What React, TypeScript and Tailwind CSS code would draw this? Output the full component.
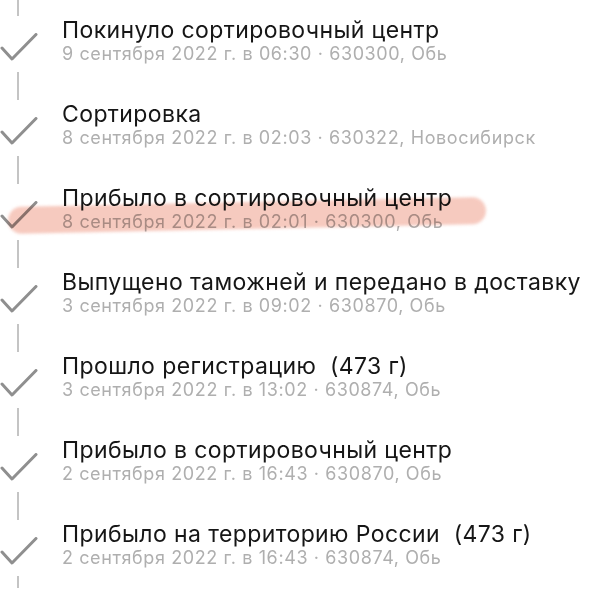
const events = [
  { title: 'Покинуло сортировочный центр', sub: '9 сентября 2022 г. в 06:30 · 630300, Обь' },
  { title: 'Сортировка', sub: '8 сентября 2022 г. в 02:03 · 630322, Новосибирск' },
  { title: 'Прибыло в сортировочный центр', sub: '8 сентября 2022 г. в 02:01 · 630300, Обь', marked: true },
  { title: 'Выпущено таможней и передано в доставку', sub: '3 сентября 2022 г. в 09:02 · 630870, Обь' },
  { title: 'Прошло регистрацию  (473 г)', sub: '3 сентября 2022 г. в 13:02 · 630874, Обь' },
  { title: 'Прибыло в сортировочный центр', sub: '2 сентября 2022 г. в 16:43 · 630870, Обь' },
  { title: 'Прибыло на территорию России  (473 г)', sub: '2 сентября 2022 г. в 16:43 · 630874, Обь' },
];

const Check = () => (
  <svg width="38" height="28" viewBox="0 0 38 28" fill="none">
    <polyline
      points="2,15 12,26 36,1.5"
      stroke="#8f8f8f"
      strokeWidth="3"
      strokeLinecap="round"
      strokeLinejoin="round"
    />
  </svg>
);

export default function App() {
  return (
    <div className="w-[600px] h-[600px] overflow-hidden bg-white font-['Inter','Noto_Sans',sans-serif]">
      {events.map((ev, i) => (
        <div key={i} className="relative flex h-[84px]">
          <div className="flex w-[62px] shrink-0 flex-col">
            <div className="ml-[17px] h-[16px] w-[2px] bg-[#c4c4c4]" />
            <div className="mt-[17px] h-[27px]">
              <Check />
            </div>
            <div className="ml-[17px] mt-[12px] h-[12px] w-[2px] bg-[#c4c4c4]" />
          </div>
          <div className="pt-[17px]">
            <div className="whitespace-pre text-[23px] leading-[26px] tracking-[0.4px] text-[#161616]">{ev.title}</div>
            <div className="whitespace-pre text-[18px] leading-[22px] tracking-[0.6px] text-[#afafaf]">{ev.sub}</div>
          </div>
          {ev.marked && (
            <div className="pointer-events-none absolute left-[8px] top-[34px] h-[27px] w-[478px] -rotate-[1.2deg] rounded-full bg-[#f2ad9c] opacity-65 mix-blend-multiply blur-[1.5px]" />
          )}
        </div>
      ))}
    </div>
  );
}
